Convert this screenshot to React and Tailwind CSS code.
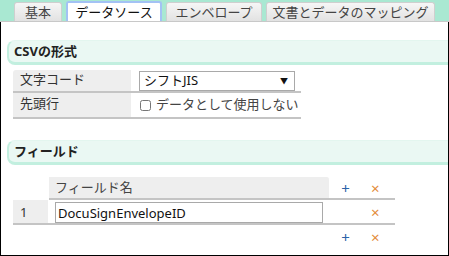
import { useState } from "react";

const tabs = ["基本", "データソース", "エンベロープ", "文書とデータのマッピング"];
const tabWidths = ["w-[48px]", "w-[96px]", "w-[96px]", "w-[169px]"];

// Section title bar with mint rounded left edge
function SectionTitle({ children }) {
    return (
        <div className="ml-[6px] h-[25px] bg-[#eaf8f3] border-l-2 border-t border-b-[3px] border-[#c2efdf] border-t-[#e3f6ef] rounded-l-[8px] flex items-center pl-[5px] text-[13px] font-bold text-[#222]">
            {children}
        </div>
    );
}

export default function App() {
    const [active, setActive] = useState(1);
    const [useHeader, setUseHeader] = useState(false);
    const [field, setField] = useState("DocuSignEnvelopeID");

    return (
        <div
            className="w-[449px] h-[256px] bg-white overflow-hidden flex flex-col text-[#333]"
            style={{ fontFamily: '"Noto Sans", "Noto Sans CJK JP", sans-serif' }}
        >
            {/* tab bar */}
            <div className="h-[22px] shrink-0 bg-[#a9e8d2] border-b border-[#c8c8c8] flex items-end pl-[14px] gap-[4px]">
                {tabs.map((t, i) => (
                    <button
                        key={t}
                        onClick={() => setActive(i)}
                        className={
                            tabWidths[i] +
                            (i === active
                                ? " h-[20px] bg-white border-2 border-b-0 border-[#a3c2f4] text-[#111]"
                                : " h-[19px] bg-gradient-to-b from-[#f6f6f6] to-[#e2e2e2] border border-b-0 border-[#cfcfcf] text-[#444]") +
                            " rounded-t-[3px] text-[13px] leading-none flex items-center justify-center"
                        }
                    >
                        {t}
                    </button>
                ))}
            </div>

            {/* body */}
            <div className="flex-1 border-l border-r border-b border-black pt-[18px]">
                <SectionTitle>CSVの形式</SectionTitle>

                <div className="ml-[12px] mt-[5px] w-[288px] text-[13px]">
                    <div className="flex h-[23px] border-b-2 border-[#c4c4c4]">
                        <div className="w-[119px] bg-[#eeeeee] rounded-tl-[3px] pl-[7px] border-r border-white">文字コード</div>
                        <div className="flex-1 pl-[7px] pt-[1px]">
                            <div className="w-[156px] h-[20px] border border-[#a9a9a9] flex items-center justify-between pl-[4px] pr-[6px] text-[#111]">
                                <span>シフトJIS</span>
                                <span className="text-[8px]">▼</span>
                            </div>
                        </div>
                    </div>
                    <div className="flex h-[26px] border-b-2 border-[#c4c4c4]">
                        <div className="w-[119px] bg-[#eeeeee] pl-[7px] pt-[1px] border-r border-white">先頭行</div>
                        <label className="flex-1 pl-[8px] flex items-center gap-[5px] text-[#444]">
                            <input
                                type="checkbox"
                                checked={useHeader}
                                onChange={(e) => setUseHeader(e.target.checked)}
                                className="w-[11px] h-[11px] accent-gray-400"
                            />
                            データとして使用しない
                        </label>
                    </div>
                </div>

                <div className="mt-[21px]">
                    <SectionTitle>フィールド</SectionTitle>
                </div>

                {/* field table */}
                <div className="ml-[12px] mt-[12px] w-[382px] text-[13px]">
                    <div className="flex h-[23px]">
                        <div className="w-[36px]" />
                        <div className="flex flex-1 border-b-2 border-[#c4c4c4]">
                            <div className="w-[281px] bg-[#eeeeee] rounded-tr-[3px] pl-[6px] pt-[1px] text-[#444] border-r border-white">フィールド名</div>
                            <div className="w-[31px] text-center text-[#2b63a8] text-[15px] leading-[22px]">+</div>
                            <div className="flex-1 pl-[10px] text-[#e38b3a] text-[15px] leading-[22px]">×</div>
                        </div>
                    </div>
                    <div className="flex h-[25px] border-b-2 border-[#c4c4c4]">
                        <div className="w-[36px] bg-[#eeeeee] pl-[7px] pt-[3px] border-r border-white">1</div>
                        <div className="w-[281px] pl-[6px] pt-[2px]">
                            <input
                                value={field}
                                onChange={(e) => setField(e.target.value)}
                                className="w-[268px] h-[21px] border border-[#a9a9a9] px-[2px] text-[13px] text-[#111] outline-none"
                            />
                        </div>
                        <div className="w-[31px]" />
                        <div className="flex-1 pl-[10px] text-[#e38b3a] text-[15px] leading-[24px]">×</div>
                    </div>
                    <div className="flex h-[24px]">
                        <div className="w-[317px]" />
                        <div className="w-[31px] text-center text-[#2b63a8] text-[15px] leading-[24px]">+</div>
                        <div className="flex-1 pl-[10px] text-[#e38b3a] text-[15px] leading-[24px]">×</div>
                    </div>
                </div>
            </div>
        </div>
    );
}
